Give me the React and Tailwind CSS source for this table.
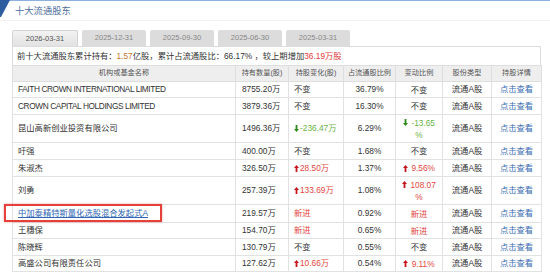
import React from 'react';

const tabs = ['2026-03-31', '2025-12-31', '2025-09-30', '2025-06-30', '2025-03-31'];

const rows = [
  { name: 'FAITH CROWN INTERNATIONAL LIMITED', latin: true, qty: '8755.20万', chg: { k: 'same' }, pct: '36.79%', ratio: { k: 'same' }, h: 'h-[16px]' },
  { name: 'CROWN CAPITAL HOLDINGS LIMITED', latin: true, qty: '3879.36万', chg: { k: 'same' }, pct: '16.30%', ratio: { k: 'same' }, h: 'h-[17px]' },
  { name: '昆山高新创业投资有限公司', qty: '1496.36万', chg: { k: 'down', v: '-236.47万' }, pct: '6.29%', ratio: { k: 'down', v: '-13.65', wrap: '%' }, h: 'h-[28px]' },
  { name: '吁强', qty: '400.00万', chg: { k: 'same' }, pct: '1.68%', ratio: { k: 'same' }, h: 'h-[17px]' },
  { name: '朱淑杰', qty: '326.50万', chg: { k: 'up', v: '28.50万' }, pct: '1.37%', ratio: { k: 'up', v: '9.56%' }, h: 'h-[17px]' },
  { name: '刘勇', qty: '257.39万', chg: { k: 'up', v: '133.69万' }, pct: '1.08%', ratio: { k: 'up', v: '108.07', wrap: '%' }, h: 'h-[28px]' },
  { name: '中加泰精特斯量化选股混合发起式A', link: true, qty: '219.57万', chg: { k: 'new' }, pct: '0.92%', ratio: { k: 'new' }, h: 'h-[18px]' },
  { name: '王穗保', qty: '154.70万', chg: { k: 'new' }, pct: '0.65%', ratio: { k: 'new' }, h: 'h-[16px]' },
  { name: '陈晓辉', qty: '130.79万', chg: { k: 'same' }, pct: '0.55%', ratio: { k: 'same' }, h: 'h-[17px]' },
  { name: '高盛公司有限责任公司', qty: '127.62万', chg: { k: 'up', v: '10.66万' }, pct: '0.54%', ratio: { k: 'up', v: '9.11%' }, h: 'h-[16px]' },
];

const UpArrow = () => (
  <svg width="5" height="7" viewBox="0 0 5 7" className="inline-block mr-[1px] -mt-[1px]">
    <path d="M2.5 0 L5 3 H3.4 V7 H1.6 V3 H0 Z" fill="#c4161c" />
  </svg>
);

const DownArrow = () => (
  <svg width="5" height="7" viewBox="0 0 5 7" className="inline-block mr-[1px] -mt-[1px]">
    <path d="M2.5 7 L5 4 H3.4 V0 H1.6 V4 H0 Z" fill="#2f8a1e" />
  </svg>
);

const Change = ({ c }) => {
  if (c.k === 'same') return <span>不变</span>;
  if (c.k === 'new') return <span className="text-[#e2463e]">新进</span>;
  if (c.k === 'up')
    return (
      <span className="text-[#e2463e] whitespace-nowrap">
        <UpArrow />
        {c.v}
      </span>
    );
  return (
    <span className="text-[#6ab344] whitespace-nowrap">
      <DownArrow />
      {c.v}
    </span>
  );
};

const Ratio = ({ r }) => {
  if (r.k === 'same') return <span>不变</span>;
  if (r.k === 'new') return <span className="text-[#e2463e]">新进</span>;
  const color = r.k === 'up' ? 'text-[#e2463e]' : 'text-[#6ab344]';
  return (
    <span className={`${color} whitespace-nowrap`}>
      {r.k === 'up' ? <UpArrow /> : <DownArrow />} {r.v}
      {r.wrap && (
        <>
          <br />
          {r.wrap}
        </>
      )}
    </span>
  );
};

const headers = ['机构或基金名称', '持有数量(股)', '持股变化(股)', '占流通股比例', '变动比例', '股份类型', '持股详情'];

export default function App() {
  return (
    <div className="relative w-[550px] h-[274px] overflow-hidden bg-white text-[#333] font-['Liberation_Sans','Noto_Sans_CJK_SC',sans-serif]">
      {/* title bar */}
      <div className="flex items-start h-[21px] border-t border-[#8db0dd] border-b border-b-[#f2f2f2]">
        <svg width="10" height="17" viewBox="0 0 10 17" className="-mt-px shrink-0">
          <path d="M0 0 H10 L1 17 H0 Z" fill="#2d5d9f" />
        </svg>
        <span className="ml-[5px] mt-[4px] text-[9.3px] leading-[12px] text-[#4f6f9c]">十大流通股东</span>
      </div>

      <div className="px-[12px] pr-[9px]">
        {/* tabs */}
        <div className="flex gap-[4px] mt-[9px] h-[16px]">
          {tabs.map((t, i) => (
            <div
              key={t}
              className={
                i === 0
                  ? 'w-[66px] flex items-center justify-center rounded-t-[2px] border border-b-0 border-[#d3d3d3] bg-gradient-to-b from-[#f2f2f2] to-[#e2e2e2] text-[7.5px] text-[#555]'
                  : 'w-[64px] flex items-center justify-center rounded-t-[2px] bg-[#dcdcdc] text-[7.5px] text-[#888]'
              }
            >
              {t}
            </div>
          ))}
        </div>

        {/* summary */}
        <div className="h-[19px] flex items-center border border-[#dcdcdc] border-b-0 pl-[4px] text-[8.3px] text-[#333] whitespace-nowrap">
          前十大流通股东累计持有：<span className="text-[#c8752f]">1.57</span>亿股，累计占流通股比：66.17% ，较上期增加
          <span className="text-[#e03a3a]">36.19万股</span>
        </div>

        {/* table */}
        <table className="w-[529px] table-fixed border-collapse text-[8.3px]">
          <colgroup>
            <col className="w-[223px]" />
            <col className="w-[53px]" />
            <col className="w-[55px]" />
            <col className="w-[52px]" />
            <col className="w-[47px]" />
            <col className="w-[49px]" />
            <col className="w-[50px]" />
          </colgroup>
          <thead>
            <tr className="h-[16px] bg-[#eeeeee]">
              {headers.map((h) => (
                <th key={h} className="border border-[#dedede] font-normal text-[7.2px] text-[#555] text-center whitespace-nowrap p-0">
                  {h}
                </th>
              ))}
            </tr>
          </thead>
          <tbody>
            {rows.map((r) => (
              <tr key={r.name} className={r.h}>
                <td className={r.latin ? 'border border-[#e2e2e2] pl-[5px] p-0 whitespace-nowrap tracking-[-0.4px]' : 'border border-[#e2e2e2] pl-[5px] p-0 whitespace-nowrap'}>
                  {r.link ? <span className="text-[#2f67b4] underline">{r.name}</span> : r.name}
                </td>
                <td className="border border-[#e2e2e2] pl-[6px] p-0 whitespace-nowrap">{r.qty}</td>
                <td className="border border-[#e2e2e2] pl-[5px] p-0">
                  <Change c={r.chg} />
                </td>
                <td className="border border-[#e2e2e2] text-center p-0">{r.pct}</td>
                <td className="border border-[#e2e2e2] text-center p-0 leading-[12px]">
                  <Ratio r={r.ratio} />
                </td>
                <td className="border border-[#e2e2e2] text-center p-0 whitespace-nowrap">流通A股</td>
                <td className="border border-[#e2e2e2] text-center p-0 text-[#3a6db3] whitespace-nowrap">点击查看</td>
              </tr>
            ))}
          </tbody>
        </table>
      </div>

      {/* annotation box */}
      <div className="absolute left-[4px] top-[204px] w-[158px] h-[18px] border-2 border-[#e5413b] shadow-[0_0_2px_rgba(229,65,59,0.5)]" />
    </div>
  );
}
